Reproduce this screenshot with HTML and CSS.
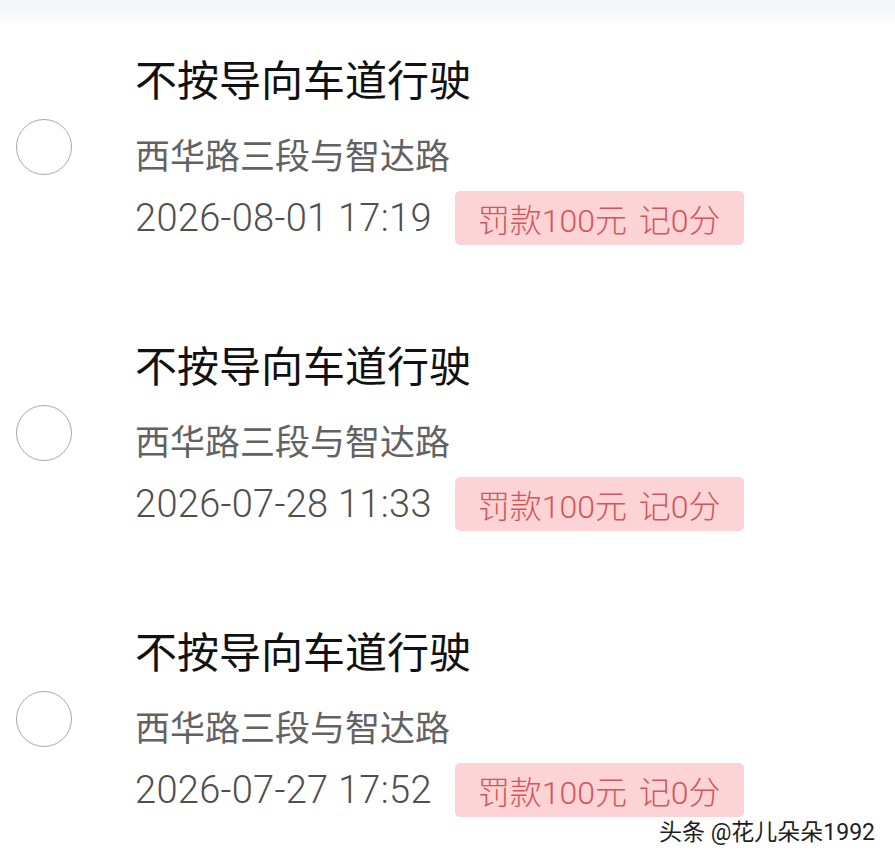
FILE: index.html
```html
<!DOCTYPE html>
<html lang="zh-CN">
<head>
  <meta charset="UTF-8">
  <meta name="viewport" content="width=device-width, initial-scale=1.0">
  <title>违法记录</title>
  <link rel="stylesheet" href="styles.css">
</head>
<body>

  <!-- Violation list -->
  <ul class="records">
    <li class="record">
      <span class="check"></span>
      <div class="record-info">
        <h3 class="record-title">不按导向车道行驶</h3>
        <p class="record-place">西华路三段与智达路</p>
        <div class="record-meta">
          <span class="record-time">2026-08-01 17:19</span>
          <span class="record-fine">罚款100元 记0分</span>
        </div>
      </div>
    </li>
    <li class="record">
      <span class="check"></span>
      <div class="record-info">
        <h3 class="record-title">不按导向车道行驶</h3>
        <p class="record-place">西华路三段与智达路</p>
        <div class="record-meta">
          <span class="record-time">2026-07-28 11:33</span>
          <span class="record-fine">罚款100元 记0分</span>
        </div>
      </div>
    </li>
    <li class="record">
      <span class="check"></span>
      <div class="record-info">
        <h3 class="record-title">不按导向车道行驶</h3>
        <p class="record-place">西华路三段与智达路</p>
        <div class="record-meta">
          <span class="record-time">2026-07-27 17:52</span>
          <span class="record-fine">罚款100元 记0分</span>
        </div>
      </div>
    </li>
  </ul>

  <div class="watermark">头条 @花儿朵朵1992</div>

</body>
</html>
```

FILE: styles.css
```css
/* General Reset */
* {
  margin: 0;
  padding: 0;
  box-sizing: border-box;
}

body {
  font-family: Roboto, "Noto Sans CJK SC", sans-serif;
  background: linear-gradient(to bottom, #f1f7f7 0, #f8f9f9 16px, #ffffff 26px);
  color: #111;
  height: 867px;
  overflow: hidden;
  position: relative;
}

/* Records */
.records {
  list-style: none;
  margin-top: 6px;
}

.record {
  display: flex;
  align-items: center;
  padding: 42px 0 47px;
}

.check {
  width: 56px;
  height: 56px;
  margin-left: 16px;
  margin-right: 63px;
  border: 1.5px solid #a8a8a8;
  border-radius: 50%;
  flex-shrink: 0;
}

.record-title {
  font-family: "Noto Sans CJK SC", sans-serif;
  font-size: 42px;
  font-weight: 400;
  line-height: 60px;
  color: #111;
}

.record-place {
  font-family: "Noto Sans CJK SC", sans-serif;
  font-size: 35px;
  line-height: 44px;
  margin-top: 24px;
  color: #626262;
}

.record-meta {
  display: flex;
  align-items: center;
  margin-top: 15px;
  height: 54px;
}

.record-time {
  font-size: 38px;
  font-weight: 300;
  letter-spacing: 0.3px;
  color: #4f4f4f;
}

.record-fine {
  margin-left: 23px;
  height: 54px;
  padding: 0 23px;
  display: flex;
  align-items: center;
  background-color: #fdd4d5;
  border-radius: 5px;
  font-size: 32px;
  font-weight: 300;
  word-spacing: 4px;
  color: #d4545a;
}

/* Watermark */
.watermark {
  position: absolute;
  right: 20px;
  bottom: 20px;
  font-size: 23px;
  color: #1e1e1e;
  text-shadow: 0 0 2px #fff, 1px 1px 0 #fff;
}
```
